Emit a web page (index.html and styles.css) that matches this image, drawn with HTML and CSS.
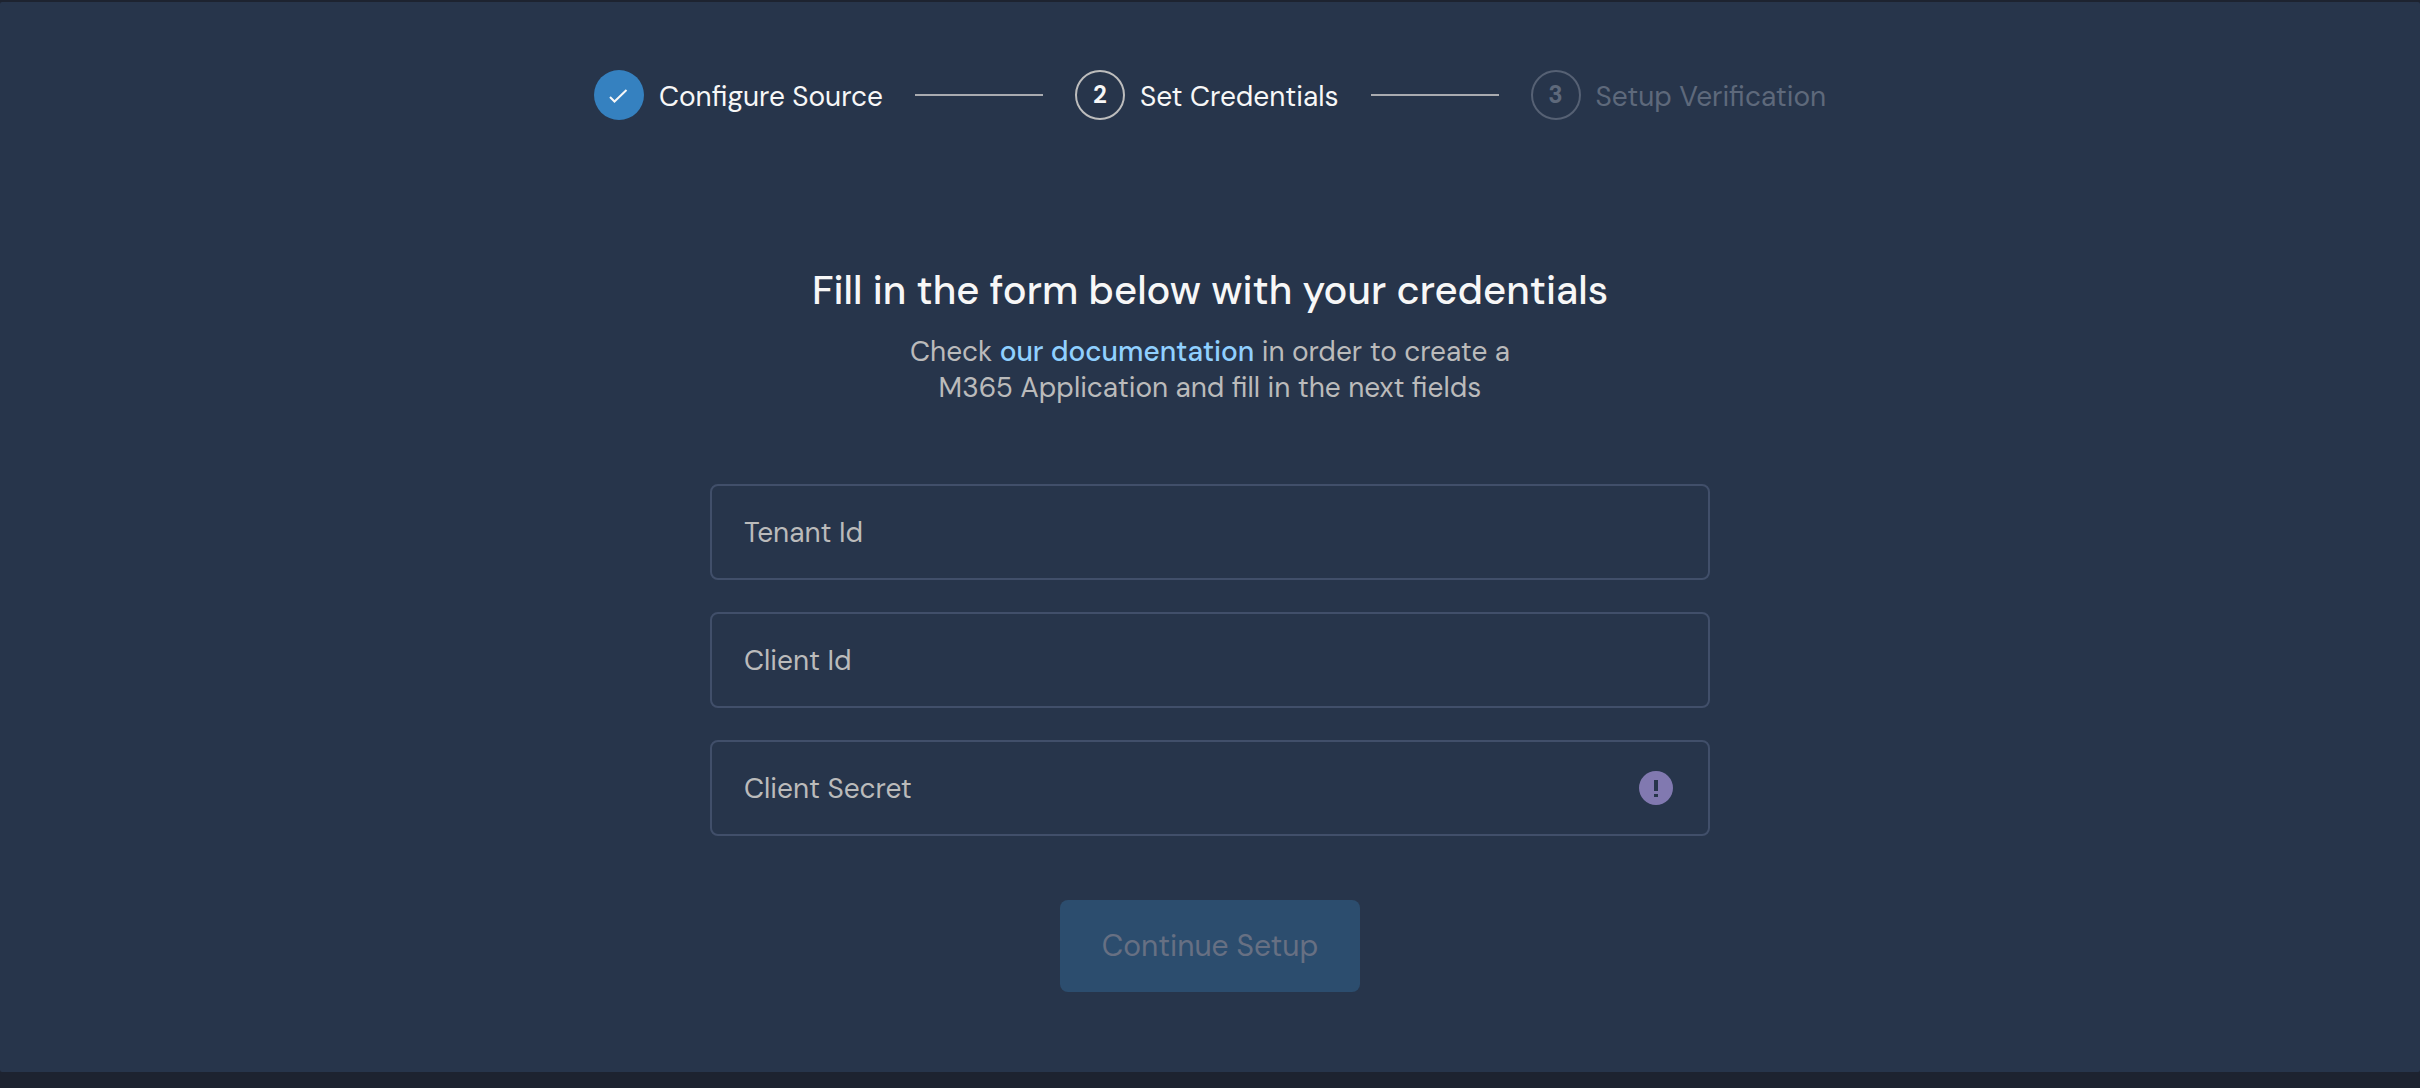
FILE: index.html
```html
<!DOCTYPE html>
<html lang="en">
<head>
<meta charset="utf-8">
<meta name="viewport" content="width=device-width, initial-scale=1">
<title>Set Credentials</title>
<link rel="stylesheet" href="styles.css">
</head>
<body>
<main class="panel">
  <ol class="stepper">
    <li class="step">
      <span class="step-mark step-mark-done">
        <svg width="50" height="50" viewBox="0 0 50 50" aria-hidden="true"><path d="M16 27l4.500 4.500L32.500 20" fill="none" stroke="currentColor" stroke-width="2"/></svg>
      </span>
      <span class="step-label">Configure Source</span>
    </li>
    <li class="step-line" aria-hidden="true"></li>
    <li class="step" aria-current="step">
      <span class="step-mark">2</span>
      <span class="step-label">Set Credentials</span>
    </li>
    <li class="step-line" aria-hidden="true"></li>
    <li class="step step-upcoming">
      <span class="step-mark">3</span>
      <span class="step-label">Setup Verification</span>
    </li>
  </ol>
  <header class="intro">
    <h1 class="title">Fill in the form below with your credentials</h1>
    <p class="hint">Check <a class="link" href="#documentation">our documentation</a> in order to create a<br>M365 Application and fill in the next fields</p>
  </header>
  <form class="form">
    <input class="field" type="text" placeholder="Tenant Id" aria-label="Tenant Id">
    <input class="field" type="text" placeholder="Client Id" aria-label="Client Id">
    <div class="field-wrap">
      <input class="field" type="text" placeholder="Client Secret" aria-label="Client Secret">
      <button class="info" type="button" aria-label="About the client secret">
        <svg width="34" height="34" viewBox="0 0 34 34" aria-hidden="true"><path fill="currentColor" fill-rule="evenodd" d="M17 0a17 17 0 1 0 0 34a17 17 0 1 0 0-34zM15 9h4v11h-4zM15 23h4v3h-4z"/></svg>
      </button>
    </div>
    <button class="submit" type="submit" disabled>Continue Setup</button>
  </form>
</main>
</body>
</html>
```
FILE: styles.css
```css
* {
  box-sizing: border-box;
}

body {
  margin: 0;
  padding: 2px 0 16px;
  background: #1d2330;
  color: #f7f7f7;
  font-family: "DM Sans", Inter, sans-serif;
  font-size: 28px;
  line-height: 36px;
}

.panel {
  display: flex;
  flex-direction: column;
  align-items: center;
  padding: 68px 32px 80px;
  border-radius: 2px;
  background: #27354b;
}

.stepper {
  display: flex;
  align-items: center;
  justify-content: center;
  gap: 32px;
  margin: 0;
  padding: 0;
  list-style: none;
}

.step {
  display: flex;
  align-items: center;
  gap: 15px;
  white-space: nowrap;
}

.step-label {
  padding-top: 4px;
}

.step-mark {
  display: flex;
  align-items: center;
  justify-content: center;
  width: 50px;
  height: 50px;
  border: 2px solid #bdbdbd;
  border-radius: 50%;
  font-size: 24px;
  font-weight: 700;
}

.step-mark-done {
  border: 0;
  background: #3581c0;
}

.step-upcoming {
  color: #5e697b;
}

.step-upcoming .step-mark {
  border-color: #566174;
}

.step-line {
  width: 128px;
  height: 2px;
  background: #a9abb0;
}

.intro {
  margin-top: 144px;
  text-align: center;
}

.title {
  margin: 0 0 18px;
  font-size: 40px;
  font-weight: 500;
  line-height: 52px;
}

.hint {
  margin: 0;
  color: #bbbbbb;
}

.link {
  color: #90d0ff;
  font-weight: 500;
  text-decoration: none;
}

.form {
  display: flex;
  flex-direction: column;
  gap: 32px;
  width: 100%;
  max-width: 1000px;
  margin-top: 78px;
}

.field {
  width: 100%;
  height: 96px;
  padding: 0 32px;
  border: 2px solid #414f6a;
  border-radius: 8px;
  background: transparent;
  color: #f7f7f7;
  font: inherit;
}

.field::placeholder {
  color: #bbbbbb;
  opacity: 1;
}

.field-wrap {
  position: relative;
}

.info {
  position: absolute;
  top: 31px;
  right: 37px;
  display: flex;
  padding: 0;
  border: 0;
  background: none;
  color: #8179b0;
}

.submit {
  align-self: center;
  width: 300px;
  height: 92px;
  margin-top: 32px;
  border: 0;
  border-radius: 8px;
  background: #2c4d6e;
  color: #677083;
  font: inherit;
  font-size: 30px;
}
```
